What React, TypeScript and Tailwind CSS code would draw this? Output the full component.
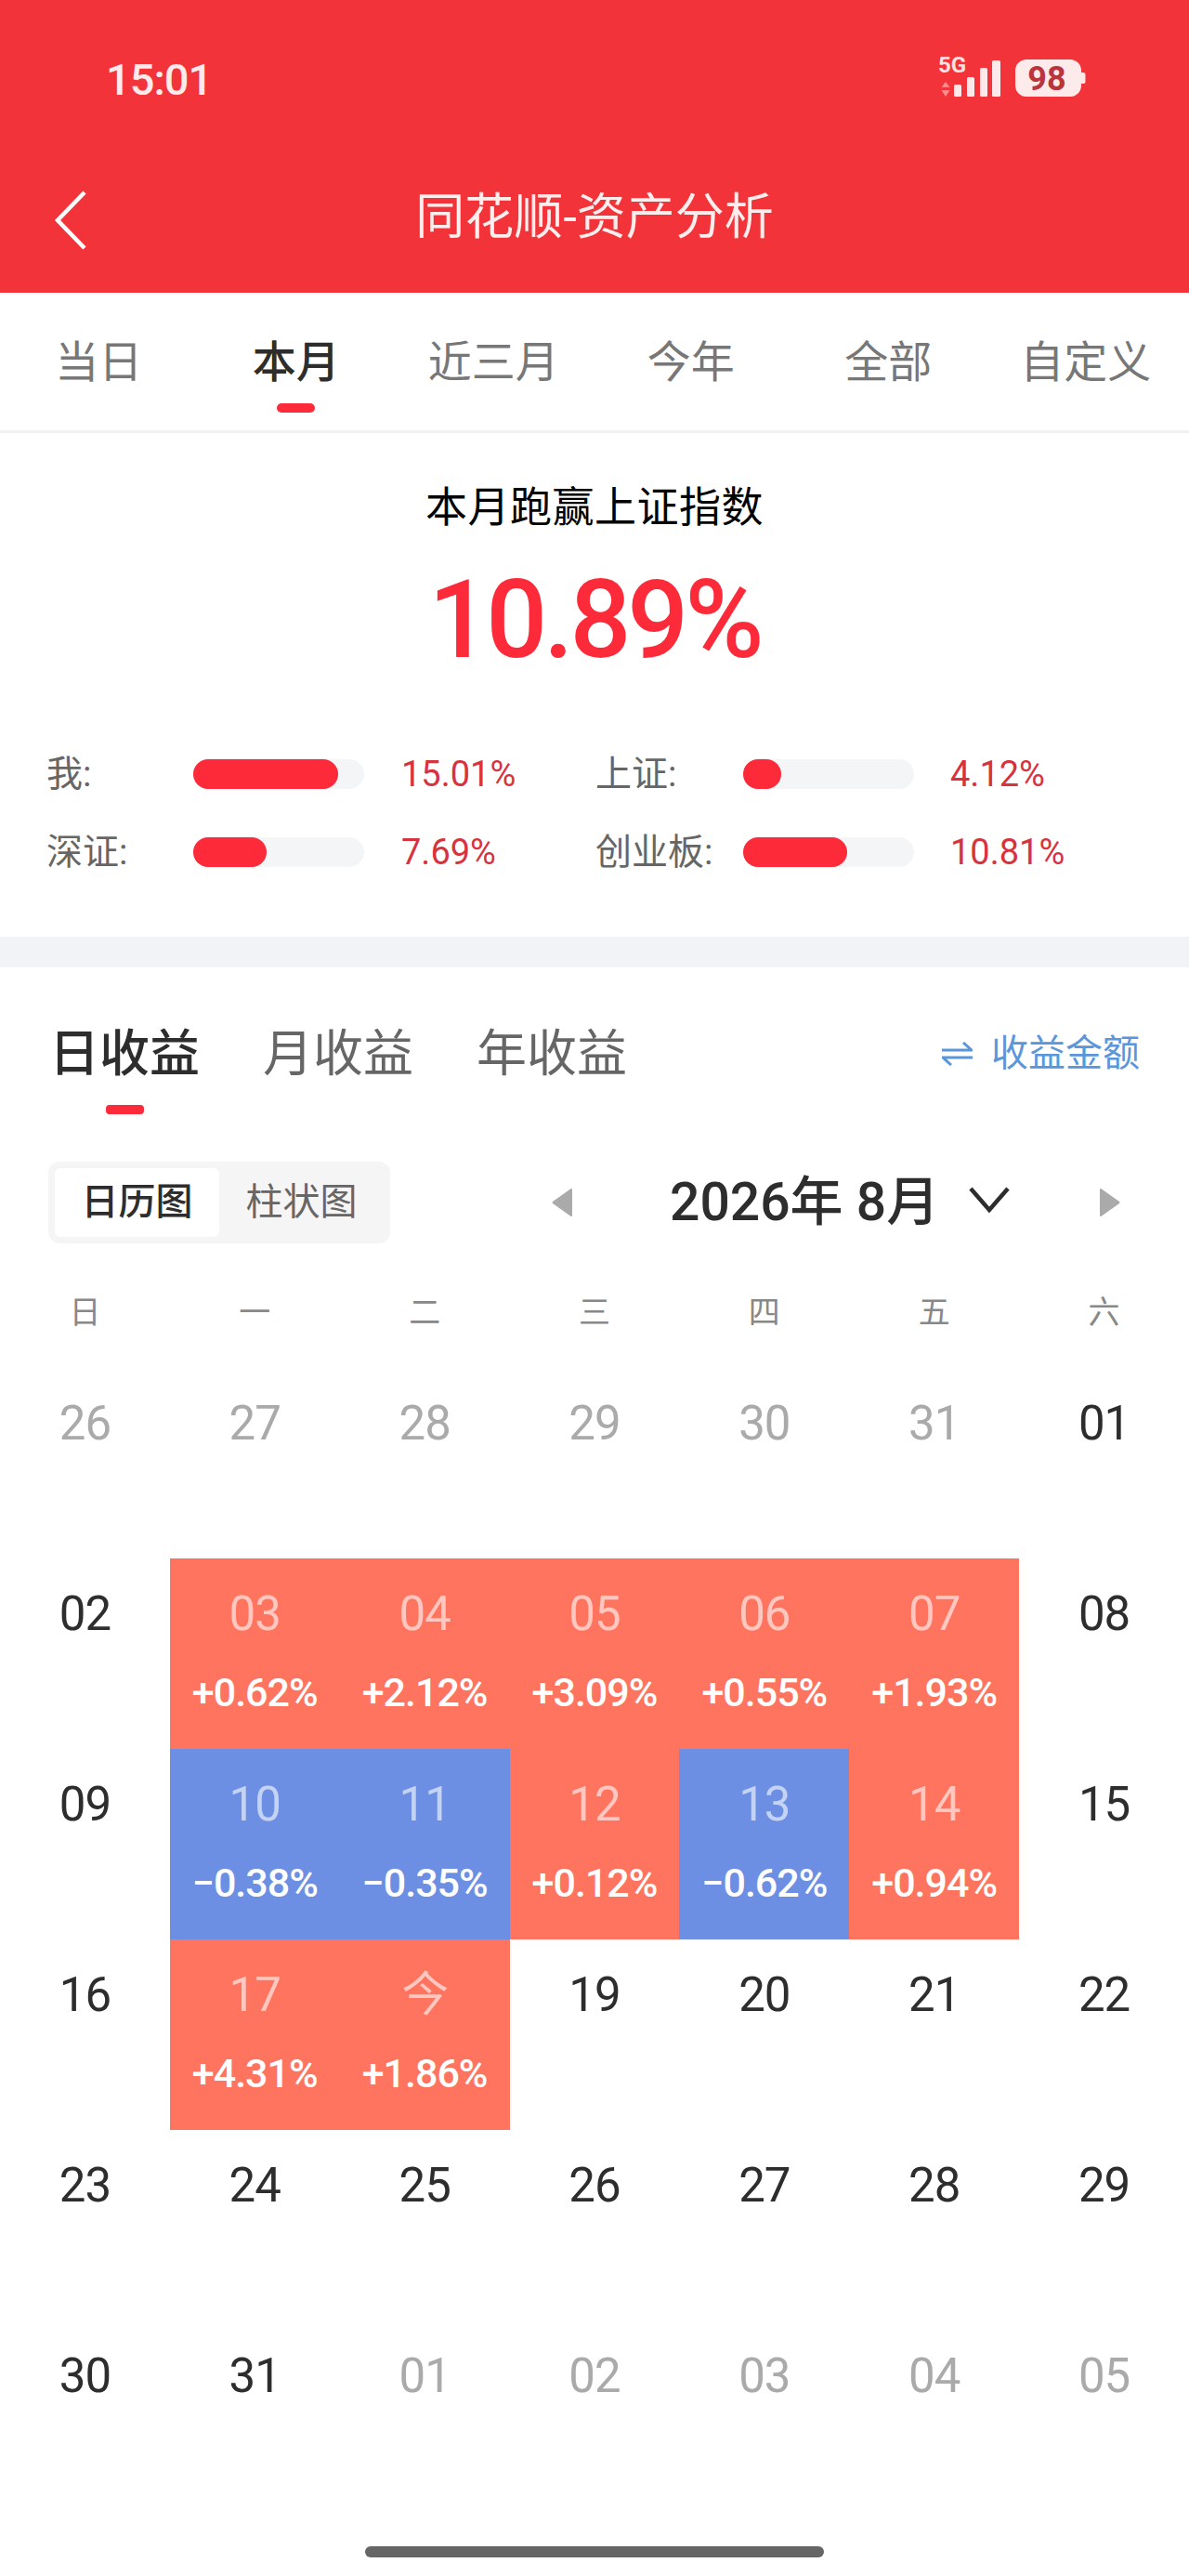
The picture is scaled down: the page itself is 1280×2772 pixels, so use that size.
import React from "react";

type Cell = { d: string; muted?: boolean; pct?: string; up?: boolean };

const rows: Cell[][] = [
  [
    { d: "26", muted: true },
    { d: "27", muted: true },
    { d: "28", muted: true },
    { d: "29", muted: true },
    { d: "30", muted: true },
    { d: "31", muted: true },
    { d: "01" },
  ],
  [
    { d: "02" },
    { d: "03", pct: "+0.62%", up: true },
    { d: "04", pct: "+2.12%", up: true },
    { d: "05", pct: "+3.09%", up: true },
    { d: "06", pct: "+0.55%", up: true },
    { d: "07", pct: "+1.93%", up: true },
    { d: "08" },
  ],
  [
    { d: "09" },
    { d: "10", pct: "−0.38%", up: false },
    { d: "11", pct: "−0.35%", up: false },
    { d: "12", pct: "+0.12%", up: true },
    { d: "13", pct: "−0.62%", up: false },
    { d: "14", pct: "+0.94%", up: true },
    { d: "15" },
  ],
  [
    { d: "16" },
    { d: "17", pct: "+4.31%", up: true },
    { d: "今", pct: "+1.86%", up: true },
    { d: "19" },
    { d: "20" },
    { d: "21" },
    { d: "22" },
  ],
  [
    { d: "23" },
    { d: "24" },
    { d: "25" },
    { d: "26" },
    { d: "27" },
    { d: "28" },
    { d: "29" },
  ],
  [
    { d: "30" },
    { d: "31" },
    { d: "01", muted: true },
    { d: "02", muted: true },
    { d: "03", muted: true },
    { d: "04", muted: true },
    { d: "05", muted: true },
  ],
];

function StatusIcons() {
  return (
    <svg width="160" height="66" viewBox="0 -20 160 66">
      <text x="0" y="18" fontSize="24" fontWeight="700" fontFamily="Roboto" fill="#fde4e4">
        5G
      </text>
      <path d="M8 28l4.500 6h-9zM8 44l4.500-7h-9z" fill="#fb8f90" />
      <rect x="17" y="31" width="8" height="13" rx="1.500" fill="#fde9e9" />
      <rect x="31" y="23" width="8" height="21" rx="1.500" fill="#fde9e9" />
      <rect x="45" y="13" width="8" height="31" rx="1.500" fill="#fde9e9" />
      <rect x="58" y="5" width="9" height="39" rx="1.500" fill="#fde9e9" />
      <rect x="83" y="4" width="71" height="40" rx="12" fill="#fdeaea" />
      <path d="M154 18h2a2.500 2.500 0 0 1 2.500 2.500v7a2.500 2.500 0 0 1-2.500 2.500h-2z" fill="#fdeaea" />
      <text x="117" y="37" textAnchor="middle" fontSize="36" fontWeight="700" fontFamily="Roboto" fill="#b9343b">
        98
      </text>
    </svg>
  );
}

function Stat({ label, pct, fill, right }: { label: string; pct: string; fill: number; right?: boolean }) {
  return (
    <div className="flex h-[32px] items-center">
      <span className={`${right ? "w-[159px]" : "w-[158px]"} text-[39px] leading-[32px] text-[#666666]`}>{label}</span>
      <div className="h-[32px] w-[184px] rounded-[16px] bg-[#f4f5f6]">
        <div className="h-full rounded-[16px] bg-[#fd2b3a]" style={{ width: fill }} />
      </div>
      <span className={`${right ? "ml-[39px]" : "ml-[40px]"} text-[38px] leading-[32px] text-[#d7333f]`}>{pct}</span>
    </div>
  );
}

export default function App() {
  return (
    <div className="h-[2772px] w-[1280px] overflow-hidden bg-white font-['Roboto','Noto_Sans_CJK_SC',sans-serif]">
      {/* Red header */}
      <header className="h-[315px] bg-[#f23339] text-white">
        <div className="flex h-[170px] items-start justify-between pl-[114px] pr-[110px] pt-[40px]">
          <span className="mt-[20px] text-[47px] font-medium leading-[52px] tracking-[-1px] text-[#fdeaea]">15:01</span>
          <StatusIcons />
        </div>
        <div className="grid h-[126px] grid-cols-[1fr_auto_1fr] items-start">
          <svg className="ml-[58px] mt-[35px]" width="36" height="64" viewBox="0 0 36 64" fill="none">
            <path d="M33 2L4 32l29 30" stroke="#fff" strokeWidth="4.500" />
          </svg>
          <h1 className="mt-[34px] text-[53px] font-normal leading-[60px] text-[#fdeeee]">同花顺-资产分析</h1>
          <span />
        </div>
      </header>

      {/* Period tabs */}
      <nav className="grid h-[151px] grid-cols-6 border-b-[3px] border-[#f1f1f1] pr-[5px] text-[47px] leading-[60px] text-[#777777]">
        {["当日", "本月", "近三月", "今年", "全部", "自定义"].map((t) => (
          <div key={t} className="flex flex-col items-center pt-[45px]">
            <span className={t === "本月" ? "font-medium text-[#2d2d2d]" : ""}>{t}</span>
            {t === "本月" && <span className="mt-[14px] h-[10px] w-[41px] rounded-[5px] bg-[#fd2b3a]" />}
          </div>
        ))}
      </nav>

      {/* Summary */}
      <section className="flex h-[542px] flex-col items-center pt-[51px]">
        <h2 className="text-[45px] font-normal leading-[60px] tracking-[0.5px] text-black">本月跑赢上证指数</h2>
        <div className="mt-[25px] text-[116px] font-medium leading-[130px] tracking-[-4px] text-[#fd2b3a]">10.89%</div>
        <div className="mt-[85px] grid w-full grid-cols-[591px_1fr] gap-y-[52px] pl-[50px]">
          <Stat label="我:" pct="15.01%" fill={156} />
          <Stat label="上证:" pct="4.12%" fill={41} right />
          <Stat label="深证:" pct="7.69%" fill={79} />
          <Stat label="创业板:" pct="10.81%" fill={112} right />
        </div>
      </section>

      <div className="h-[33px] bg-[#f2f3f7]" />

      {/* Earnings tabs */}
      <section className="flex h-[209px] items-start justify-between pl-[53px] pr-[53px] pt-[64px]">
        <div className="flex gap-x-[68px] text-[54px] leading-[60px] text-[#666666]">
          <div className="flex flex-col items-center">
            <span className="font-medium text-[#2d2d2d]">日收益</span>
            <span className="mt-[24px] h-[10px] w-[41px] rounded-[4px] bg-[#fd2b3a]" />
          </div>
          <span>月收益</span>
          <span>年收益</span>
        </div>
        <div className="mt-[5px] flex items-center gap-x-[20px] text-[40px] leading-[48px] text-[#5b96da]">
          <svg width="33" height="26" viewBox="0 0 33 26" fill="none" stroke="#5b96da" strokeWidth="3">
            <path d="M0 9h32L23 1" />
            <path d="M33 17H1l9 8" />
          </svg>
          <span>收益金额</span>
        </div>
      </section>

      {/* View switch + month picker */}
      <section className="flex h-[88px] items-center pl-[52px]">
        <div className="flex h-[88px] w-[368px] rounded-[12px] bg-[#f5f5f5] p-[7px] text-[40px] text-[#666666]">
          <span className="flex w-[178px] items-center justify-center rounded-[6px] bg-white font-medium text-[#2d2d2d]">
            日历图
          </span>
          <span className="flex w-[178px] items-center justify-center">柱状图</span>
        </div>
        <svg className="ml-[174px]" width="22" height="30" viewBox="0 0 22 30">
          <path d="M22 1v28a1 1 0 0 1-1.600.8L1 16a1.500 1.500 0 0 1 0-2L20.400.2A1 1 0 0 1 22 1z" fill="#aaaaaa" />
        </svg>
        <span className="ml-[105px] whitespace-pre text-[57px] font-medium leading-[64px] text-[#2d2d2d]">2026年 8月</span>
        <svg className="ml-[32px] -translate-y-[3px]" width="44" height="28" viewBox="0 0 44 28" fill="none">
          <path d="M2 2l20 23L42 2" stroke="#2d2d2d" strokeWidth="4.500" />
        </svg>
        <svg className="ml-[97px]" width="22" height="30" viewBox="0 0 22 30">
          <path d="M0 1v28a1 1 0 0 0 1.600.8L21 16a1.500 1.500 0 0 0 0-2L1.600.2A1 1 0 0 0 0 1z" fill="#aaaaaa" />
        </svg>
      </section>

      {/* Weekdays */}
      <div className="grid h-[134px] grid-cols-7 pt-[44px] text-[34px] leading-[60px] text-[#888888]">
        {["日", "一", "二", "三", "四", "五", "六"].map((w) => (
          <span key={w} className="text-center">
            {w}
          </span>
        ))}
      </div>

      {/* Calendar */}
      <div className="grid grid-cols-7">
        {rows.flat().map((c, i) => {
          const bg = c.pct ? (c.up ? "bg-[#ff745f]" : "bg-[#6d8fe3]") : "";
          const color = c.pct ? "text-white/60" : c.muted ? "text-[#aaaaaa]" : "text-[#2d2d2d]";
          return (
            <div key={i} className={`flex h-[205px] flex-col items-center pt-[30px] ${bg}`}>
              <span className={`text-[51px] leading-[60px] tracking-[-1px] ${color}`}>{c.d}</span>
              {c.pct && (
                <span className="mt-[29px] text-[43px] font-medium leading-[50px] tracking-[-1px] text-white">{c.pct}</span>
              )}
            </div>
          );
        })}
      </div>

      {/* Home indicator */}
      <div className="mt-[38px] flex justify-center">
        <span className="h-[12px] w-[494px] rounded-[6px] bg-[#666666]" />
      </div>
    </div>
  );
}
